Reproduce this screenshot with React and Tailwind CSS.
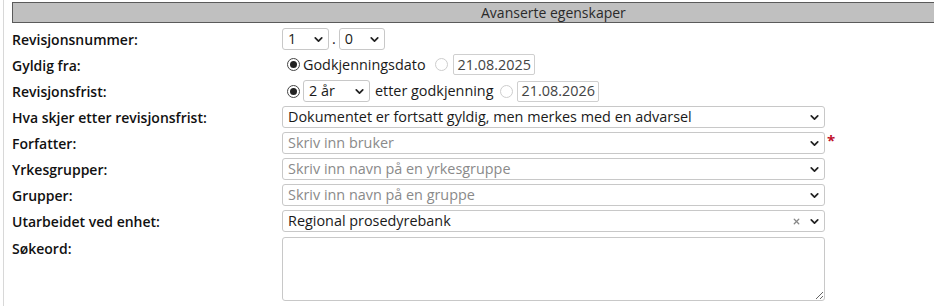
import { ChevronDown, X } from 'lucide-react'

const font = { fontFamily: '"Open Sans", "Noto Sans", sans-serif' }

function Chevron() {
  return <ChevronDown size={13} strokeWidth={3.2} className="text-[#222]" />
}

function Select({ value, placeholder, className = '', clear }) {
  return (
    <div className={`h-[22px] flex items-center justify-between border border-[#c8c8c8] rounded-[3px] bg-white pl-[5px] pr-[3px] ${className}`}>
      <span className={value ? 'text-[#1a1a1a]' : 'text-[#8a8a8a]'}>{value || placeholder}</span>
      <span className="flex items-center gap-[7px]">
        {clear && <X size={9} strokeWidth={3.5} className="text-[#888]" />}
        <Chevron />
      </span>
    </div>
  )
}

function Radio({ checked }) {
  return (
    <span className={`w-[13px] h-[13px] rounded-full border flex items-center justify-center bg-white ${checked ? 'border-[#444]' : 'border-[#cdcdcd]'}`}>
      {checked && <span className="w-[7px] h-[7px] rounded-full bg-[#222]" />}
    </span>
  )
}

function DateBox({ value }) {
  return (
    <span className="h-[21px] w-[82px] flex items-center border border-[#cfcfcf] rounded-[2px] px-[4px] text-[#444]">{value}</span>
  )
}

function Row({ label, children, tall }) {
  return (
    <div className={`flex ${tall ? 'items-start h-[70px] pt-[3px]' : 'items-center h-[26px]'}`}>
      <div className={`w-[270px] text-[14px] font-semibold text-[#111] ${tall ? 'pt-[1px]' : ''}`}>{label}</div>
      <div className="flex items-center text-[14.4px]">{children}</div>
    </div>
  )
}

export default function App() {
  return (
    <div className="w-[934px] h-[306px] bg-white overflow-hidden text-[14px]" style={font}>
      <div className="ml-[3px] border-l border-[#d8d8d8] h-full pl-[8px] pt-[2px]">
        {/* Header */}
        <div className="w-[1100px] h-[21px] bg-[#c0c0c0] border-y border-[#5a5a5a] border-l flex items-center text-[#2a2a2a] leading-none">
          <span className="ml-[468px]">Avanserte egenskaper</span>
        </div>

        <div className="mt-[3px]">
          <Row label="Revisjonsnummer:">
            <Select value="1" className="w-[47px]" />
            <span className="mx-[3px] text-[#222]">.</span>
            <Select value="0" className="w-[46px]" />
          </Row>
          <Row label="Gyldig fra:">
            <div className="flex items-center ml-[5px]">
              <Radio checked />
              <span className="ml-[3px] text-[#1a1a1a]">Godkjenningsdato</span>
              <span className="ml-[9px]"><Radio /></span>
              <span className="ml-[5px]"><DateBox value="21.08.2025" /></span>
            </div>
          </Row>
          <Row label="Revisjonsfrist:">
            <div className="flex items-center ml-[5px]">
              <Radio checked />
              <Select value="2 år" className="ml-[3px] w-[67px]" />
              <span className="ml-[5px] text-[#1a1a1a]">etter godkjenning</span>
              <span className="ml-[6px]"><Radio /></span>
              <span className="ml-[4px]"><DateBox value="21.08.2026" /></span>
            </div>
          </Row>
          <Row label="Hva skjer etter revisjonsfrist:">
            <Select value="Dokumentet er fortsatt gyldig, men merkes med en advarsel" className="w-[543px]" />
          </Row>
          <Row label="Forfatter:">
            <Select placeholder="Skriv inn bruker" className="w-[543px]" />
            <span className="ml-[2px] -mt-[6px] text-[#c0102a] font-bold text-[15px]">*</span>
          </Row>
          <Row label="Yrkesgrupper:">
            <Select placeholder="Skriv inn navn på en yrkesgruppe" className="w-[543px]" />
          </Row>
          <Row label="Grupper:">
            <Select placeholder="Skriv inn navn på en gruppe" className="w-[543px]" />
          </Row>
          <Row label="Utarbeidet ved enhet:">
            <Select value="Regional prosedyrebank" className="w-[543px]" clear />
          </Row>
          <Row label="Søkeord:" tall>
            <textarea className="w-[543px] h-[64px] border border-[#c8c8c8] rounded-[3px] resize-y" />
          </Row>
        </div>
      </div>
    </div>
  )
}
